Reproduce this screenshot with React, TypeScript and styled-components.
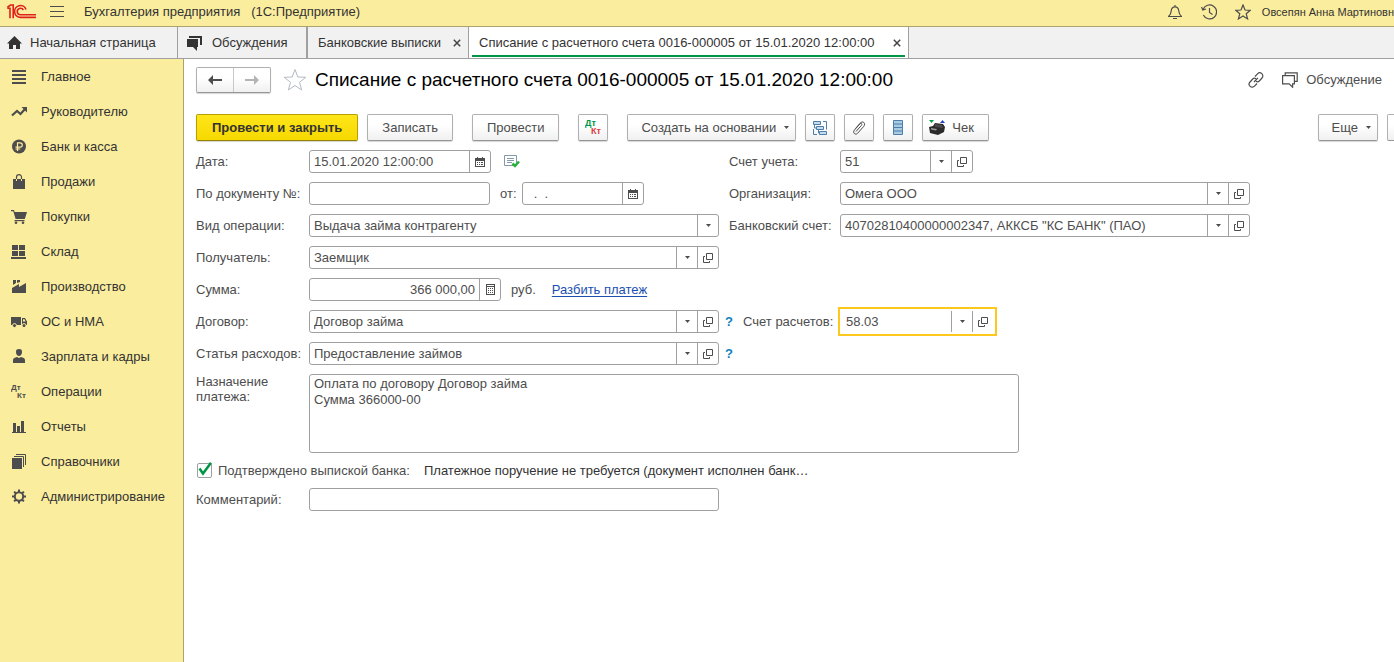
import React from "react";
import styled, { createGlobalStyle, css } from "styled-components";

const color = {
  yellow: "#fbed9e",
  yellowLine: "#aea26b",
  line: "#a0a0a0",
  text: "#4d4d4d",
  dark: "#333333",
  green: "#009646",
  focus: "#fcc81e",
  link: "#1a4fae",
  hint: "#1480b8",
};

const GlobalStyle = createGlobalStyle`
  * { box-sizing: border-box; }
  body {
    margin: 0;
    background: #fff;
    color: ${color.text};
    font: 13px/16px "Liberation Sans", Arial, sans-serif;
  }
  button, input, select, textarea { font: inherit; color: inherit; margin: 0; }
  svg { display: block; flex: none; }
`;

const Page = styled.div`
  min-height: 100vh;
  display: flex;
  flex-direction: column;
  overflow: hidden;
`;

const TopBar = styled.header`
  display: flex;
  align-items: center;
  height: 27px;
  padding-left: 7px;
  padding-bottom: 3px;
  background: ${color.yellow};
  border-bottom: 1px solid ${color.yellowLine};
  color: ${color.dark};
`;

const IconButton = styled.button`
  border: 0;
  padding: 0;
  background: none;
  color: ${color.text};
  cursor: pointer;
`;

const MenuButton = styled(IconButton)`
  margin: 0 20px 0 14px;
`;

const AppTitle = styled.div`
  white-space: pre;
`;

const TopTools = styled.div`
  display: flex;
  align-items: center;
  gap: 18px;
  margin-left: auto;
`;

const UserName = styled.div`
  margin-left: 11px;
  white-space: nowrap;
  font-size: 11px;
`;

const Tabs = styled.nav`
  display: flex;
  height: 32px;
  background: #f1f1f1;
  border-bottom: 1px solid ${color.line};
`;

const Tab = styled.div<{ $width: number; $active?: boolean; $wide?: boolean }>`
  display: flex;
  align-items: center;
  flex: 0 0 ${(p) => p.$width}px;
  padding: 0 3px;
  border-right: ${(p) => (p.$wide ? 2 : 1)}px solid ${color.line};
  background: ${(p) => (p.$active ? "#fff" : "transparent")};
  color: ${color.dark};
`;

const TabInner = styled.div<{ $active?: boolean }>`
  display: flex;
  align-items: center;
  justify-content: space-between;
  flex: 1;
  height: 27px;
  margin-top: 2px;
  padding: 0 4px 0 7px;
  border-bottom: 2px solid ${(p) => (p.$active ? color.green : "transparent")};
  white-space: nowrap;
`;

const HomeTabInner = styled(TabInner)`
  padding: 0 4px;
`;

const TabLink = styled.a`
  display: flex;
  align-items: center;
  gap: 8px;
  color: inherit;
  text-decoration: none;
`;

const Body = styled.div`
  display: flex;
  flex: 1;
`;

const Sidebar = styled.nav`
  flex: none;
  width: 184px;
  background: ${color.yellow};
  border-right: 1px solid ${color.yellowLine};
`;

const SideLink = styled.a`
  display: flex;
  align-items: center;
  gap: 14px;
  height: 35px;
  padding-left: 11px;
  color: ${color.dark};
  text-decoration: none;
  svg { color: ${color.text}; }
`;

const Main = styled.main`
  flex: 1;
  min-width: 0;
  padding: 8px 0 8px 12px;
`;

const TitleRow = styled.div`
  display: flex;
  align-items: center;
  height: 26px;
  margin-bottom: 21px;
  padding-right: 12px;
`;

const raised = css`
  border: 1px solid #b0b0b0;
  border-bottom-color: #969696;
  border-radius: 2px;
  background: linear-gradient(#ffffff 40%, #f0f0f0);
  box-shadow: 0 1px 1px #d6d6d6;
`;

const History = styled.div`
  ${raised}
  display: flex;
  width: 75px;
  height: 26px;
`;

const HistoryButton = styled(IconButton)`
  display: grid;
  place-items: center;
  flex: 1;
  & + & {
    border-left: 1px solid #c8c8c8;
    color: #b4b4b4;
  }
`;

const Favourite = styled(IconButton)`
  margin: 0 8px 0 12px;
`;

const Title = styled.h1`
  margin: 0;
  color: #000;
  font-size: 19px;
  font-weight: 400;
  line-height: 24px;
  white-space: nowrap;
`;

const TitleTools = styled.div`
  display: flex;
  align-items: center;
  gap: 18px;
  margin-left: auto;
`;

const DiscussButton = styled(IconButton)`
  display: flex;
  align-items: center;
  gap: 8px;
`;

const Toolbar = styled.div`
  display: flex;
  gap: 19px;
  margin-bottom: 9px;
`;

const Group = styled.div<{ $end?: boolean }>`
  display: flex;
  gap: 9px;
  margin-left: ${(p) => (p.$end ? "auto" : "0")};
`;

const Button = styled.button<{ $primary?: boolean; $square?: boolean }>`
  ${raised}
  display: flex;
  align-items: center;
  justify-content: center;
  gap: 6px;
  height: 27px;
  padding: 0 14px;
  white-space: nowrap;
  cursor: pointer;
  ${(p) => p.$square && css`
    width: 30px;
    padding: 0;
  `}
  ${(p) => p.$primary && css`
    padding: 0 15px;
    border-color: #b8a000;
    border-bottom-color: #958200;
    background: linear-gradient(#ffe61a, #f7d800);
    color: ${color.dark};
    font-weight: 700;
  `}
`;

const CheckButton = styled(Button)`
  padding: 0 14px 0 5px;
`;

const DropButton = styled(Button)`
  gap: 8px;
  padding: 0 6px 0 13px;
`;

const Clipped = styled.div`
  width: 7px;
  overflow: hidden;
`;

const Form = styled.form`
  display: flex;
  flex-direction: column;
  gap: 9px;
`;

const Row = styled.div`
  display: flex;
  align-items: center;
  min-height: 23px;
`;

const TopRow = styled(Row)`
  align-items: flex-start;
`;

const Label = styled.label`
  flex: none;
  width: 113px;
  white-space: nowrap;
`;

const TwoLineLabel = styled(Label)`
  line-height: 15px;
  white-space: normal;
`;

const Left = styled.div`
  display: flex;
  align-items: center;
  flex: 0 1 410px;
  min-width: 0;
`;

const Middle = styled.div`
  display: flex;
  align-items: center;
  gap: 10px;
  flex: none;
  width: 121px;
  padding-left: 6px;
  white-space: nowrap;
`;

const MiddlePlain = styled(Middle)`
  padding-left: 10px;
`;

const Right = styled.div`
  display: flex;
  flex: 0 1 410px;
  min-width: 0;
`;

const Field = styled.div<{ $width?: number; $focus?: boolean }>`
  display: flex;
  flex: ${(p) => (p.$width ? `0 1 ${p.$width}px` : "1")};
  min-width: 0;
  height: 23px;
  border: 1px solid ${color.line};
  border-radius: 3px;
  background: #fff;
  ${(p) => p.$focus && css`
    height: 29px;
    margin: -3px 0 -3px -2px;
    padding: 2px;
    border: 2px solid ${color.focus};
    border-radius: 0;
  `}
`;

const Input = styled.input<{ $right?: boolean }>`
  flex: 1;
  min-width: 0;
  width: 100%;
  border: 0;
  padding: 0 4px;
  outline: 0;
  background: none;
  text-align: ${(p) => (p.$right ? "right" : "left")};
`;

const SelectBox = styled.div`
  position: relative;
  display: flex;
  flex: 1;
  min-width: 0;
`;

const Select = styled.select`
  appearance: none;
  flex: 1;
  min-width: 0;
  border: 0;
  padding: 0 24px 0 4px;
  outline: 0;
  background: none;
`;

const SelectArrow = styled.span`
  position: absolute;
  inset: 0 0 0 auto;
  display: grid;
  place-items: center;
  width: 21px;
  border-left: 1px solid ${color.line};
  pointer-events: none;
`;

const FieldButton = styled(IconButton)`
  display: grid;
  place-items: center;
  flex: none;
  width: 21px;
  border-left: 1px solid ${color.line};
`;

const Between = styled.label`
  padding: 0 5px 0 10px;
`;

const Mark = styled(IconButton)`
  margin-left: 13px;
`;

const Currency = styled.span`
  margin: 0 16px 0 10px;
`;

const Link = styled.a`
  color: ${color.link};
  text-decoration: underline;
  text-underline-offset: 2px;
  text-decoration-thickness: 1px;
`;

const Hint = styled(IconButton)`
  color: ${color.hint};
  font-weight: 700;
  width: 8px;
`;

const Purpose = styled.textarea`
  flex: 0 1 710px;
  min-width: 0;
  height: 79px;
  padding: 1px 4px;
  border: 1px solid ${color.line};
  border-radius: 3px;
  outline: 0;
  resize: none;
`;

const ConfirmRow = styled.div`
  display: flex;
  align-items: center;
  height: 17px;
`;

const CheckLabel = styled.label`
  display: flex;
  align-items: center;
  gap: 5px;
  margin-right: 14px;
  white-space: nowrap;
`;

const CheckBox = styled.span`
  position: relative;
  display: block;
  width: 17px;
  height: 17px;
  padding: 1px;
  svg {
    position: absolute;
    inset: 0;
    pointer-events: none;
  }
`;

const CheckInput = styled.input`
  appearance: none;
  display: block;
  width: 15px;
  height: 15px;
  border: 1px solid ${color.line};
  border-radius: 2px;
`;

const Note = styled.span`
  min-width: 0;
  overflow: hidden;
  text-overflow: ellipsis;
  white-space: nowrap;
  color: ${color.dark};
`;

type SvgProps = { w: number; h: number; children: React.ReactNode };

const Fill = ({ w, h, children }: SvgProps) => (
  <svg width={w} height={h} viewBox={`0 0 ${w} ${h}`} fill="currentColor" aria-hidden="true">{children}</svg>
);

const Stroke = ({ w, h, children }: SvgProps) => (
  <svg width={w} height={h} viewBox={`0 0 ${w} ${h}`} fill="none" stroke="currentColor" strokeWidth="1.2" aria-hidden="true">{children}</svg>
);

const Logo = () => (
  <svg width="29" height="15" viewBox="0 0 29 15" fill="none" stroke="#e0201b" strokeWidth="1.6" role="img" aria-label="1C">
    <path d="M.3 4.300H3V14.300M.3 3.300L3.600 1H6.200V14.300" />
    <path d="M19 5.500A5.900 5.900 0 1 0 13.500 13.400H29" />
    <path d="M16.300 6A3.200 3.200 0 1 0 13.500 10.700H29" />
  </svg>
);

const Triangle = () => <Fill w={5} h={3}><path d="M0 0h5L2.5 3z" /></Fill>;

const Close = () => (
  <svg width="8" height="8" viewBox="0 0 8 8" stroke="#444" strokeWidth="1.5" aria-hidden="true"><path d="M.8.8l6.4 6.4M7.2.8L.8 7.2" /></svg>
);

const OpenIcon = () => (
  <svg width="10" height="10" viewBox="0 0 10 10" fill="none" stroke="currentColor" aria-hidden="true">
    <path d="M3.500.5h6v6h-6zM2 3.500H.5v6h6V8" />
  </svg>
);

const CalendarIcon = () => (
  <Fill w={10} h={10}>
    <path d="M0 1h2V0h1v1h4V0h1v1h2v9H0zM1 4v5h8V4z" fillRule="evenodd" />
    <path d="M2 5h1v1H2zM4 5h1v1H4zM6 5h2v1H6zM2 7h1v1H2zM4 7h1v1H4zM6 7h2v1H6z" />
  </Fill>
);

const CalcIcon = () => (
  <Fill w={9} h={11}>
    <path d="M0 0h9v11H0zM1 1v9h7V1z" fillRule="evenodd" />
    <path d="M1 2h7v1H1zM2 4h1v1H2zM4 4h1v1H4zM6 4h1v1H6zM2 6h1v1H2zM4 6h1v1H4zM6 6h1v1H6zM2 8h1v1H2zM4 8h1v1H4zM6 8h1v1H6z" />
  </Fill>
);

const ChatOutline = () => (
  <Stroke w={16} h={16}>
    <path d="M.6 3.6h11.8v8.2h-1.8v3.4l-3.4-3.4H.6zM3.2 3V.8h12v8.6h-2.2" />
  </Stroke>
);

const DtKt = ({ dt, kt, size = 8 }: { dt: string; kt: string; size?: number }) => (
  <svg width="17" height="17" viewBox="0 0 17 17" fontFamily="Liberation Sans, Arial, sans-serif" fontWeight="700" fontSize={size} aria-hidden="true">
    <text x="0" y="7" fill={dt}>Дт</text>
    <text x="6" y="15" fill={kt}>Кт</text>
  </svg>
);

const sections: { name: string; icon: React.ReactNode }[] = [
  { name: "Главное", icon: <path d="M1 2h14v2H1zM1 6h14v2H1zM1 10h14v2H1zM1 14h14v2H1z" /> },
  {
    name: "Руководителю",
    icon: (
      <>
        <path d="M1 12.5L6 8l3.5 3L14 6" fill="none" stroke="currentColor" strokeWidth="2.2" />
        <path d="M10.5 4H16v5.5z" />
      </>
    ),
  },
  {
    name: "Банк и касса",
    icon: (
      <>
        <circle cx="8" cy="8.5" r="7" />
        <path d="M6.5 13V4.8h2.6a2.1 2.1 0 0 1 0 4.4H4.5M4.5 11h4.8" fill="none" stroke={color.yellow} strokeWidth="1.2" />
      </>
    ),
  },
  {
    name: "Продажи",
    icon: (
      <>
        <path d="M2 6h12v10H2z" />
        <path d="M5.5 8V4.2a2.5 2.5 0 0 1 5 0V8" fill="none" stroke="currentColor" strokeWidth="1.2" />
        <path d="M5.5 6v2M10.5 6v2" stroke={color.yellow} />
      </>
    ),
  },
  {
    name: "Покупки",
    icon: (
      <>
        <path d="M0 2h3l.6 2H16l-2.2 7H4.6L2.3 3.2H0z" />
        <path d="M3.5 12h10v1.2h-10z" />
        <circle cx="5" cy="14.8" r="1.3" />
        <circle cx="12" cy="14.8" r="1.3" />
      </>
    ),
  },
  { name: "Склад", icon: <path d="M1 2h6v5H1zM8 2h6v5H8zM1 8h6v5H1zM8 8h6v5H8zM0 14h15v2H0z" /> },
  { name: "Производство", icon: <path d="M2 2h3v3L2 7zM6 2h3v2L6 5zM1 10l7-4v3L15 5v10H1z" /> },
  {
    name: "ОС и НМА",
    icon: (
      <>
        <path d="M0 4h10v8H0zM11 5h3l2 3.5V12h-5z" />
        <path d="M12 6.2h1.5L14.6 8.500H12z" fill={color.yellow} />
        <circle cx="3.5" cy="12.6" r="2" stroke={color.yellow} />
        <circle cx="13" cy="12.600" r="2" stroke={color.yellow} />
      </>
    ),
  },
  { name: "Зарплата и кадры", icon: <path d="M8 1a3 3 0 0 1 3 3.300C11 6.500 9.500 8 8 8S5 6.500 5 4.300A3 3 0 0 1 8 1zM2 15v-3c0-2 2-2.500 4-3l2 1 2-1c2 .5 4 1 4 3v3z" /> },
  { name: "Операции", icon: null },
  { name: "Отчеты", icon: <path d="M2 5h3v9H2zM6 8h3v6H6zM10 3h3v11h-3zM1 14h14v1H1z" /> },
  {
    name: "Справочники",
    icon: (
      <>
        <path d="M1 5h10v11H1z" />
        <path d="M3 3.500h9.500V14M5 1.500h9.500V12" fill="none" stroke="currentColor" />
      </>
    ),
  },
  {
    name: "Администрирование",
    icon: (
      <>
        <circle cx="8" cy="8.500" r="4.200" fill="none" stroke="currentColor" strokeWidth="2" />
        <path d="M8 1.500V4M8 13v2.500M1 8.500h2.500M12.500 8.500H15M3.100 3.600l1.700 1.700M11.200 11.700l1.700 1.700M12.900 3.600l-1.700 1.700M4.800 11.700l-1.700 1.700" stroke="currentColor" strokeWidth="2" />
      </>
    ),
  },
];

type ComboProps = { id: string; value: string; width?: number; open?: boolean; focus?: boolean };

const Combo = ({ id, value, width, open = true, focus }: ComboProps) => (
  <Field $width={width} $focus={focus}>
    <SelectBox>
      <Select id={id} defaultValue={value}>
        <option>{value}</option>
      </Select>
      <SelectArrow><Triangle /></SelectArrow>
    </SelectBox>
    {open && <FieldButton type="button" aria-label="Открыть"><OpenIcon /></FieldButton>}
  </Field>
);

export default function App() {
  return (
    <Page>
      <GlobalStyle />
      <TopBar>
        <Logo />
        <MenuButton aria-label="Меню">
          <Fill w={14} h={12}><path d="M0 0h14v1H0zM0 5h14v1H0zM0 10h14v1H0z" /></Fill>
        </MenuButton>
        <AppTitle>{"Бухгалтерия предприятия   (1С:Предприятие)"}</AppTitle>
        <TopTools>
          <IconButton aria-label="Уведомления">
            <Stroke w={16} h={16}><path d="M1 12.500h14M1.500 12.500c2-1.500 2.500-3 2.700-5.500C4.400 4.300 5.800 2.800 8 2.800S11.600 4.300 11.800 7c.2 2.500.7 4 2.700 5.500M8 2.800V1M6 14.500h4" /></Stroke>
          </IconButton>
          <IconButton aria-label="История">
            <Stroke w={16} h={16}><path d="M2 5.500A7 7 0 1 1 2.300 11M.5 3l1.300 3L5 5M8.500 4v4.500l3 2" /></Stroke>
          </IconButton>
          <IconButton aria-label="Избранное">
            <Stroke w={16} h={16}><path d="M8 1l2 5 5.300.3-4.100 3.400 1.400 5.200L8 12l-4.600 2.900 1.400-5.200L.7 6.300 6 6z" /></Stroke>
          </IconButton>
        </TopTools>
        <UserName>Овсепян Анна Мартиновн</UserName>
      </TopBar>

      <Tabs>
        <Tab $width={178}>
          <HomeTabInner>
            <TabLink href="#home">
              <Fill w={15} h={14}><path d="M7.500 0L15 7.500h-2V13H9V9H6v4H2V7.500H0z" /></Fill>
              Начальная страница
            </TabLink>
          </HomeTabInner>
        </Tab>
        <Tab $wide $width={130}>
          <HomeTabInner>
            <TabLink href="#talks">
              <Fill w={19} h={16}><path d="M2 4h11v8h-1v4l-4-4H2zM4 1h13v9h-2V3H4z" /></Fill>
              Обсуждения
            </TabLink>
          </HomeTabInner>
        </Tab>
        <Tab $width={161}>
          <TabInner>
            <TabLink href="#statements">Банковские выписки</TabLink>
            <IconButton aria-label="Закрыть"><Close /></IconButton>
          </TabInner>
        </Tab>
        <Tab $active $width={440}>
          <TabInner $active>
            <TabLink href="#writeoff">Списание с расчетного счета 0016-000005 от 15.01.2020 12:00:00</TabLink>
            <IconButton aria-label="Закрыть"><Close /></IconButton>
          </TabInner>
        </Tab>
      </Tabs>

      <Body>
        <Sidebar>
          {sections.map((s) => (
            <SideLink key={s.name} href="#section">
              <Fill w={16} h={17}>{s.icon ?? <DtKt dt={color.text} kt={color.text} />}</Fill>
              {s.name}
            </SideLink>
          ))}
        </Sidebar>

        <Main>
          <TitleRow>
            <History>
              <HistoryButton aria-label="Назад">
                <Fill w={14} h={10}><path d="M0 5l5-5v4h9v2H5v4z" /></Fill>
              </HistoryButton>
              <HistoryButton aria-label="Вперед">
                <Fill w={14} h={10}><path d="M14 5L9 0v4H0v2h9v4z" /></Fill>
              </HistoryButton>
            </History>
            <Favourite aria-label="В избранное">
              <svg width="24" height="24" viewBox="0 0 24 24" fill="#fff" stroke="#b4bac4" aria-hidden="true">
                <path d="M12 1.500l2.800 7.500 8 .3-6.300 5 2.200 7.700L12 17.500 5.300 22l2.200-7.700-6.300-5 8-.3z" />
              </svg>
            </Favourite>
            <Title>Списание с расчетного счета 0016-000005 от 15.01.2020 12:00:00</Title>
            <TitleTools>
              <IconButton aria-label="Ссылка">
                <Stroke w={16} h={16}><path d="M7 4.500l2.500-2.700a2.900 2.900 0 0 1 4.500 4.200L11.300 9c-1 1-2.300 1-3.300.3M9 11.500l-2.500 2.700A2.900 2.900 0 0 1 2 10L4.700 7c1-1 2.300-1 3.300-.3M6 10l4-4.200" /></Stroke>
              </IconButton>
              <DiscussButton><ChatOutline />Обсуждение</DiscussButton>
            </TitleTools>
          </TitleRow>

          <Toolbar>
            <Group>
              <Button $primary>Провести и закрыть</Button>
              <Button>Записать</Button>
            </Group>
            <Button>Провести</Button>
            <Button $square aria-label="Проводки"><DtKt dt="#009646" kt="#d9403c" size={9} /></Button>
            <Group>
              <DropButton>Создать на основании <Triangle /></DropButton>
              <Button $square aria-label="Структура подчиненности">
                <svg width="16" height="16" viewBox="0 0 16 16" fill="#c3dcf0" stroke="#4d7fa8" aria-hidden="true">
                  <path d="M1.500 1.500h7v3h-7zM4.500 6.500h7v3h-7zM7.500 11.500h7v3h-7z" />
                  <path d="M2.500 5v3h2M6.500 10v3h1M11 1.500h3.500v8M1.500 9v5.500H5" fill="none" />
                </svg>
              </Button>
              <Button $square aria-label="Присоединенные файлы">
                <Stroke w={14} h={16}><path d="M4 11.500l5.500-6.200c1.200-1.300-.4-2.600-1.500-1.500L2.300 10.200c-2 2.400 1 5.400 3.300 3.100l6.200-7c2.400-3-1-6-3.600-3.200L3.500 8.500" strokeWidth="1" /></Stroke>
              </Button>
              <Button $square aria-label="Реестр">
                <svg width="10" height="15" viewBox="0 0 10 15" fill="#a9cbe3" stroke="#4d7fa8" aria-hidden="true">
                  <path d="M.5.500h9v14h-9zM.5 4h9M.5 7.500h9M.5 11h9" />
                </svg>
              </Button>
              <CheckButton>
                <svg width="18" height="17" viewBox="0 0 18 17" aria-hidden="true">
                  <path d="M1 8l4-1 2-3 8 1 2 3-1 5-6 3-8-2z" fill="#2b2b2b" />
                  <path d="M7 5l7 1 1 3-8-1z" fill="#4a4a4a" />
                  <path d="M3 9l6 1-1 1.500-5-1z" fill="#9a9a9a" />
                  <path d="M1 1h5L3.500 4z" fill="#00a050" />
                  <path d="M12 4h5l-2.500-3z" fill="#2540c8" />
                </svg>
                Чек
              </CheckButton>
            </Group>
            <Group $end>
              <DropButton>Еще <Triangle /></DropButton>
              <Clipped><Button $square aria-label="Справка" /></Clipped>
            </Group>
          </Toolbar>

          <Form>
            <Row>
              <Label htmlFor="date">Дата:</Label>
              <Left>
                <Field $width={182}>
                  <Input id="date" defaultValue="15.01.2020 12:00:00" />
                  <FieldButton type="button" aria-label="Календарь"><CalendarIcon /></FieldButton>
                </Field>
                <Mark type="button" aria-label="Проведен">
                  <svg width="16" height="13" viewBox="0 0 16 13" fill="none" aria-hidden="true">
                    <path d="M.5.500h12v10H.5z" stroke="#8498a8" />
                    <path d="M3 3.500h7M3 5.500h7M3 7.500h5" stroke="#8498a8" />
                    <path d="M8.500 8.500l2.500 2.500 4-4.500" stroke="#27b23c" strokeWidth="2.500" />
                  </svg>
                </Mark>
              </Left>
              <MiddlePlain as="label" htmlFor="account">Счет учета:</MiddlePlain>
              <Right><Combo id="account" value="51" width={133} /></Right>
            </Row>
            <Row>
              <Label htmlFor="docno">По документу №:</Label>
              <Left>
                <Field $width={181}><Input id="docno" /></Field>
                <Between htmlFor="docdate">от:</Between>
                <Field $width={122}>
                  <Input id="docdate" defaultValue="  .  ." />
                  <FieldButton type="button" aria-label="Календарь"><CalendarIcon /></FieldButton>
                </Field>
              </Left>
              <MiddlePlain as="label" htmlFor="org">Организация:</MiddlePlain>
              <Right><Combo id="org" value="Омега ООО" /></Right>
            </Row>
            <Row>
              <Label htmlFor="kind">Вид операции:</Label>
              <Left><Combo id="kind" value="Выдача займа контрагенту" open={false} /></Left>
              <MiddlePlain as="label" htmlFor="bank">Банковский счет:</MiddlePlain>
              <Right><Combo id="bank" value={'40702810400000002347, АККСБ "КС БАНК" (ПАО)'} /></Right>
            </Row>
            <Row>
              <Label htmlFor="payee">Получатель:</Label>
              <Left><Combo id="payee" value="Заемщик" /></Left>
            </Row>
            <Row>
              <Label htmlFor="sum">Сумма:</Label>
              <Left>
                <Field $width={192}>
                  <Input id="sum" $right defaultValue="366 000,00" />
                  <FieldButton type="button" aria-label="Калькулятор"><CalcIcon /></FieldButton>
                </Field>
                <Currency>руб.</Currency>
                <Link href="#split">Разбить платеж</Link>
              </Left>
            </Row>
            <Row>
              <Label htmlFor="contract">Договор:</Label>
              <Left><Combo id="contract" value="Договор займа" /></Left>
              <Middle>
                <Hint type="button">?</Hint>
                <label htmlFor="settle">Счет расчетов:</label>
              </Middle>
              <Right><Combo id="settle" value="58.03" width={159} focus /></Right>
            </Row>
            <Row>
              <Label htmlFor="article">Статья расходов:</Label>
              <Left><Combo id="article" value="Предоставление займов" /></Left>
              <Middle><Hint type="button">?</Hint></Middle>
            </Row>
            <TopRow>
              <TwoLineLabel htmlFor="purpose">Назначение платежа:</TwoLineLabel>
              <Purpose id="purpose" defaultValue={"Оплата по договору Договор займа\nСумма 366000-00"} />
            </TopRow>
            <ConfirmRow>
              <CheckLabel>
                <CheckBox>
                  <CheckInput type="checkbox" defaultChecked />
                  <svg width="17" height="17" viewBox="0 0 17 17" fill="none" stroke={color.green} strokeWidth="2.500" aria-hidden="true">
                    <path d="M3.500 6.500l3.500 5L15 .8" />
                  </svg>
                </CheckBox>
                Подтверждено выпиской банка:
              </CheckLabel>
              <Note>Платежное поручение не требуется (документ исполнен банк…</Note>
            </ConfirmRow>
            <Row>
              <Label htmlFor="comment">Комментарий:</Label>
              <Left><Field><Input id="comment" /></Field></Left>
            </Row>
          </Form>
        </Main>
      </Body>
    </Page>
  );
}
